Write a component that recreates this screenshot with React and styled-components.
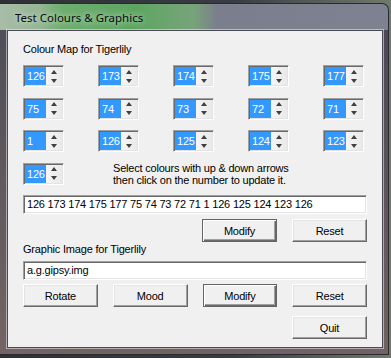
import styled, { createGlobalStyle } from "styled-components"

const Global = createGlobalStyle`
    html, body {
        margin: 0;
        padding: 0;
    }
    body {
        width: 391px;
        height: 358px;
        overflow: hidden;
        background: linear-gradient(90deg, #2e3036 0%, #3a3c44 60%, #6f7a6c 100%);
        font-family: "Liberation Sans", Arial, sans-serif;
    }
`

const colours = [
    [126, 173, 174, 175, 177],
    [75, 74, 73, 72, 71],
    [1, 126, 125, 124, 123],
]

export default function App() {
    return (
        <>
            <Global />
            <Window>
                <TitleBar>
                    <Title>Test Colours &amp; Graphics</Title>
                </TitleBar>
                <Client>
                    <Label>Colour Map for Tigerlily</Label>
                    <SpinGrid>
                        {colours.flat().map((n, i) => (
                            <Spinner key={i} value={n} focused={i === 0} />
                        ))}
                        <Spinner value={126} />
                        <Hint>
                            Select colours with up &amp; down arrows<br />
                            then click on the number to update it.
                        </Hint>
                    </SpinGrid>
                    <Field $top={10.5}>126 173 174 175 177 75 74 73 72 71 1 126 125 124 123 126</Field>
                    <ButtonRow $top={5} $end>
                        <Button $default>Modify</Button>
                        <Button>Reset</Button>
                    </ButtonRow>
                    <Label $top={1}>Graphic Image for Tigerlily</Label>
                    <Field $top={5}>a.g.gipsy.img</Field>
                    <ButtonRow $top={4}>
                        <Button>Rotate</Button>
                        <Button>Mood</Button>
                        <Button $default>Modify</Button>
                        <Button>Reset</Button>
                    </ButtonRow>
                    <ButtonRow $top={9} $end>
                        <Button>Quit</Button>
                    </ButtonRow>
                </Client>
            </Window>
        </>
    )
}

function Spinner({ value, focused }) {
    return (
        <SpinBox>
            <SpinValue $focused={focused}><span>{value}</span></SpinValue>
            <SpinArrows>
                <Arrow $up />
                <Arrow />
            </SpinArrows>
        </SpinBox>
    )
}

const Window = styled.div`
    margin-top: 3px;
    width: 389px;
    height: 352px;
    box-sizing: border-box;
    padding: 0 5px 6px 7px;
    border-radius: 0 7px 0 0;
    border: 1px solid #2a2b30;
    border-left: none;
    display: flex;
    flex-direction: column;
    background:
        linear-gradient(180deg, rgba(0,0,0,0) 0, rgba(0,0,0,0) 26px, rgba(70,66,78,0.9) 26px, rgba(112,96,96,0.95) 100%),
        linear-gradient(90deg, #a8bda8 0%, #97b896 10%, #6fae70 16%, #5ea662 35%, #78a37a 50%, #7b7e8c 56%, #7e818f 100%);
`
const TitleBar = styled.div`
    height: 26px;
    flex: none;
    box-sizing: border-box;
    padding: 6px 0 0 8px;
`
const Title = styled.div`
    font-family: "Noto Sans", "Open Sans", sans-serif;
    font-size: 11.5px;
    line-height: 16px;
    color: #0a0a14;
    text-shadow: 0 0 6px rgba(220,245,220,0.8), 0 0 10px rgba(220,245,220,0.5);
`
const Client = styled.div`
    flex: 1;
    box-sizing: border-box;
    background: #f0f0f0;
    border: 1px solid #4a4a55;
    box-shadow: 0 0 0 1px rgba(235,235,245,0.55);
    padding: 12px 0 0 15px;
    display: flex;
    flex-direction: column;
    font-size: 11px;
    letter-spacing: -0.2px;
    color: #000;
`
const Label = styled.div`
    line-height: 13px;
    margin-top: ${p => p.$top || 0}px;
`
const SpinGrid = styled.div`
    margin-top: 9px;
    display: grid;
    grid-template-columns: repeat(5, 41px);
    grid-auto-rows: 22px;
    column-gap: 34px;
    row-gap: 10.5px;
`
const SpinBox = styled.div`
    display: flex;
    box-sizing: border-box;
    border: 1px solid;
    border-color: #a0a0a0 #ffffff #ffffff #a0a0a0;
    box-shadow: inset 1px 1px 0 #696969, inset -1px -1px 0 #e3e3e3;
    padding: 1px;
`
const SpinValue = styled.div`
    width: 21px;
    background: #3399ff;
    color: #fff;
    box-sizing: border-box;
    line-height: 18px;
    padding-left: 2px;
    border: 1px dotted ${p => (p.$focused ? "#e0782a" : "transparent")};
    border-left: none;
    span {
        position: relative;
        top: -1px;
    }
`
const SpinArrows = styled.div`
    flex: 1;
    display: flex;
    flex-direction: column;
    background: linear-gradient(90deg, #f6f6f6, #e9e9e9);
`
const Arrow = styled.div`
    flex: 1;
    display: flex;
    align-items: center;
    justify-content: center;
    &::after {
        content: "";
        width: 0;
        height: 0;
        border-left: 3.5px solid transparent;
        border-right: 3.5px solid transparent;
        ${p => (p.$up ? "border-bottom: 4px solid #404040;" : "border-top: 4px solid #404040;")}
    }
`
const Hint = styled.div`
    grid-column: 2 / 6;
    padding-left: 15px;
    margin-top: -1px;
    line-height: 12px;
    white-space: nowrap;
`
const Field = styled.div`
    margin-top: ${p => p.$top}px;
    width: 344px;
    height: 19px;
    box-sizing: border-box;
    background: #fff;
    border: 1px solid;
    border-color: #a0a0a0 #ffffff #ffffff #a0a0a0;
    box-shadow: inset 1px 1px 0 #696969, inset -1px -1px 0 #e3e3e3;
    padding: 0 3px;
    line-height: 17px;
    white-space: nowrap;
    overflow: hidden;
`
const ButtonRow = styled.div`
    margin-top: ${p => p.$top}px;
    width: 344px;
    display: flex;
    justify-content: ${p => (p.$end ? "flex-end" : "flex-start")};
    gap: 15px;
`
const Button = styled.div`
    width: 75px;
    height: 23px;
    box-sizing: border-box;
    display: flex;
    align-items: center;
    justify-content: center;
    background: #f0f0f0;
    border: 1px solid;
    border-color: ${p => (p.$default ? "#646464" : "#ffffff #696969 #696969 #ffffff")};
    box-shadow: ${p => (p.$default
        ? "inset 1px 1px 0 #ffffff, inset -1px -1px 0 #696969, inset -2px -2px 0 #a0a0a0"
        : "inset -1px -1px 0 #a0a0a0, inset 1px 1px 0 #e3e3e3")};
    font-size: 11px;
`
